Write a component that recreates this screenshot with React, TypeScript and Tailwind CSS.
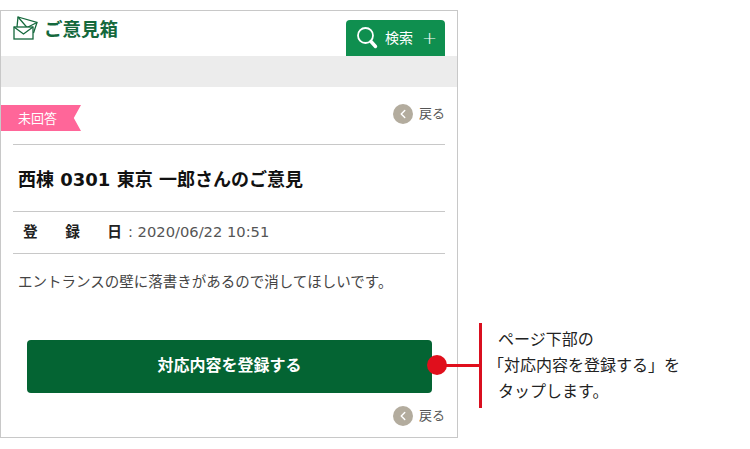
import { ChevronLeft } from "lucide-react";

const font = { fontFamily: '"DejaVu Sans", "Noto Sans CJK JP", sans-serif' };

function BackLink() {
  return (
    <div className="flex items-center gap-[6px]">
      <span className="flex h-[20px] w-[20px] items-center justify-center rounded-full bg-[#b3ac9e]">
        <ChevronLeft className="h-[14px] w-[14px] text-white" strokeWidth={2.5} />
      </span>
      <span className="text-[13px] leading-none text-[#555]">戻る</span>
    </div>
  );
}

export default function App() {
  return (
    <div className="flex h-[449px] w-[750px] overflow-hidden bg-white pt-[10px] text-[#333]" style={font}>
      {/* Phone frame */}
      <div className="relative h-[428px] w-[458px] shrink-0 border border-[#c8c8c8]">
        <header className="flex h-[45px] justify-between pr-[12px] pl-[12px]">
          <div className="flex h-[38px] items-center gap-[6px]">
            <svg width="25" height="24" viewBox="0 0 25 24" fill="none" stroke="#14683c" strokeWidth="1.3" className="mt-[5px] self-start">
              <path d="M4 11 L5 1 L24 6.5 L20.5 17" />
              <path d="M5 1 L14 11.5 L24 6.5" />
              <rect x="1" y="11" width="19" height="12" fill="#fff" />
              <path d="M1 11 L10.5 18 L20 11" />
            </svg>
            <span className="text-[18.5px] font-bold leading-none text-[#14683c]">ご意見箱</span>
          </div>
          <div className="mt-[9px] flex h-[36px] w-[99px] items-center rounded-t-[4px] bg-[#0f8f4f] pl-[10px] text-white">
            <svg width="22" height="24" viewBox="0 0 22 24" fill="none" stroke="#fff">
              <circle cx="9.5" cy="9.5" r="7.5" strokeWidth="1.8" />
              <path d="M15 15.5 L19.5 20.5" strokeWidth="3.4" strokeLinecap="round" />
            </svg>
            <span className="ml-[7px] text-[14px] leading-none">検索</span>
            <span className="ml-[9px] text-[18px] font-light leading-none">+</span>
          </div>
        </header>
        <div className="h-[31px] bg-[#ececec]" />

        <div className="mt-[18px] flex h-[26px] items-center justify-between pr-[12px]">
          <div className="flex h-[26px] w-[80px] items-center bg-[#ff6699] pl-[17px] text-[13px] leading-none text-white [clip-path:polygon(0_0,100%_0,91%_50%,100%_100%,0_100%)]">
            未回答
          </div>
          <div className="-mt-[9px]">
            <BackLink />
          </div>
        </div>

        <div className="mx-[12px] mt-[13px] border-t border-[#c8c8c8]" />
        <h1 className="mx-[12px] flex h-[66px] items-center pt-[3px] pl-[5px] text-[18px] font-bold leading-none text-[#111]">
          西棟 0301 東京 一郎さんのご意見
        </h1>
        <div className="mx-[12px] flex h-[43px] items-center border-y border-[#c8c8c8] pl-[10px] text-[14.7px] leading-none">
          <span className="flex w-[99px] justify-between font-bold text-[#222]">
            <span>登</span>
            <span>録</span>
            <span>日</span>
          </span>
          <span className="ml-[6px] text-[#555]">: 2020/06/22 10:51</span>
        </div>
        <p className="mx-[12px] mt-[21px] pl-[5px] text-[14.5px] leading-none text-[#444]">
          エントランスの壁に落書きがあるので消してほしいです。
        </p>

        <button className="mt-[50px] ml-[26px] flex h-[53px] w-[405px] items-center justify-center rounded-[4px] bg-[#046433] text-[16px] font-bold text-white">
          対応内容を登録する
        </button>
        <div className="mt-[13px] flex justify-end pr-[12px]">
          <BackLink />
        </div>

        {/* Callout dot and connector */}
        <div className="absolute top-[344px] left-[426px] h-[20px] w-[20px] rounded-full bg-[#e00f1c]" />
        <div className="absolute top-[353px] left-[440px] h-[3px] w-[39px] bg-[#e00f1c]" />
      </div>

      {/* Annotation */}
      <div className="mt-[313px] ml-[21px] flex h-[85px] border-l-[3px] border-[#d90f1f] pl-[6px]">
        <p className="pt-[4px] text-[16px] leading-[26px] text-[#222]">
          <span className="block pl-[10px]">ページ下部の</span>
          <span className="block">「対応内容を登録する」を</span>
          <span className="block pl-[10px]">タップします。</span>
        </p>
      </div>
    </div>
  );
}
